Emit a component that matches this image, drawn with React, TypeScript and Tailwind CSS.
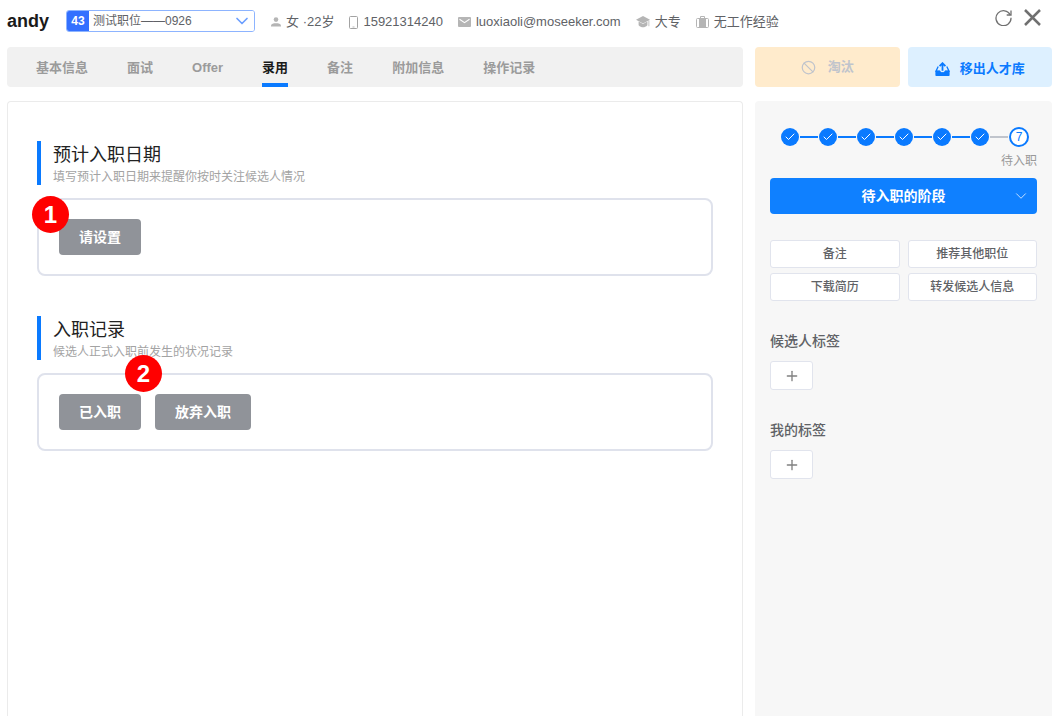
import { useState } from "react";
import type { ReactNode } from "react";
import { Ban, Check, ChevronDown, Plus } from "lucide-react";
import clsx from "clsx";

const tabs = ["基本信息", "面试", "Offer", "录用", "备注", "附加信息", "操作记录"];

const actions = ["备注", "推荐其他职位", "下载简历", "转发候选人信息"];

const tagGroups = ["候选人标签", "我的标签"];

const totalSteps = 7;

function PersonIcon() {
  return (
    <svg width="10" height="10" viewBox="0 0 10 10" fill="#b5b5b5" aria-hidden="true">
      <circle cx="5" cy="2.6" r="2.3" />
      <path d="M0 9.500V8.400C0 6.800 2.600 6.200 5 6.200s5 .6 5 2.200v1.100z" />
    </svg>
  );
}

function PhoneIcon() {
  return (
    <svg width="9" height="13" viewBox="0 0 9 13" fill="none" stroke="#a3a3a3" aria-hidden="true">
      <rect x=".5" y=".5" width="8" height="12" rx="1" />
      <path d="M3.500 11h2" strokeWidth=".8" />
    </svg>
  );
}

function MailIcon() {
  return (
    <svg width="13" height="10" viewBox="0 0 13 10" aria-hidden="true">
      <rect width="13" height="10" rx="1" fill="#b5b5b5" />
      <path d="M1.500 2.200 6.500 5.600l5-3.400" fill="none" stroke="#fff" strokeWidth="1.100" />
    </svg>
  );
}

function DegreeIcon() {
  return (
    <svg width="14" height="12" viewBox="0 0 14 12" fill="#b5b5b5" aria-hidden="true">
      <path d="M7 0 0 3.800l7 3.600 7-3.600z" />
      <path d="M2.600 5.600v3.600C4 10.600 5.500 11.300 7 11.300s3-.7 4.400-2.100V5.600L7 7.900z" />
      <path d="M12.500 4.500h.8v5.700h-.8z" />
    </svg>
  );
}

function BriefcaseIcon() {
  return (
    <svg width="13" height="12" viewBox="0 0 13 12" aria-hidden="true">
      <path d="M4.500 2.500v-2h4v2" fill="none" stroke="#b5b5b5" />
      <rect x=".5" y="2.500" width="12" height="9" rx="1" fill="none" stroke="#b5b5b5" />
      <path d="M3 2.500h7v9H3z" fill="#b5b5b5" />
    </svg>
  );
}

function RefreshIcon() {
  return (
    <svg width="17" height="17" viewBox="0 0 17 17" fill="none" stroke="#707070" strokeWidth="1.300" aria-hidden="true">
      <path d="M15.300 6A7.500 7.500 0 1 0 16 8.800" />
      <path d="M16 1.500V6h-4.300" />
    </svg>
  );
}

function CloseIcon() {
  return (
    <svg width="17" height="17" viewBox="0 0 17 17" stroke="#707070" strokeWidth="2.500" aria-hidden="true">
      <path d="M1 1l15 15M16 1 1 16" />
    </svg>
  );
}

function MoveOutIcon() {
  return (
    <svg width="15" height="14" viewBox="0 0 15 14" aria-hidden="true">
      <path d="M3.200 4.500 1 9.200h3.600l1 1.600h3.800l1-1.600H14l-2.200-4.700" fill="none" stroke="#0a7aff" strokeWidth="1.300" />
      <path d="M.4 8.800h4.400l1 1.600h3.400l1-1.600h4.400V13c0 .6-.4 1-1 1H1.400c-.6 0-1-.4-1-1z" fill="#0a7aff" />
      <path d="M7.500 8.800V1.500M4.600 4.200l2.900-3 2.900 3" fill="none" stroke="#0a7aff" strokeWidth="1.800" />
    </svg>
  );
}

function InfoItem({ icon, children }: { icon: ReactNode; children: ReactNode }) {
  return (
    <li className="flex items-center gap-[5px] whitespace-nowrap">
      {icon}
      <span>{children}</span>
    </li>
  );
}

function Marker({ className, children }: { className: string; children: ReactNode }) {
  return (
    <span
      className={clsx(
        "absolute flex size-[37px] items-center justify-center rounded-full bg-[#ff0000] text-2xl font-bold text-white",
        className
      )}
    >
      {children}
    </span>
  );
}

function Section({ title, hint, children }: { title: string; hint: string; children: ReactNode }) {
  return (
    <section>
      <div className="border-l-4 border-[#0a7aff] pl-3">
        <h2 className="text-lg leading-7 text-[#222]">{title}</h2>
        <p className="text-xs leading-4 text-[#a3a3a3]">{hint}</p>
      </div>
      <div className="relative mt-[13px] flex gap-[14px] rounded-lg border-2 border-[#dfe2ec] px-5 py-[19px]">
        {children}
      </div>
    </section>
  );
}

function GrayButton({ children }: { children: ReactNode }) {
  return (
    <button type="button" className="h-9 rounded bg-[#909399] px-5 text-sm font-bold text-white">
      {children}
    </button>
  );
}

function Steps() {
  const items: ReactNode[] = [];
  for (let i = 1; i < totalSteps; i++) {
    items.push(
      <li key={i} className="flex flex-1 items-center">
        <span className="flex size-[18px] shrink-0 items-center justify-center rounded-full bg-[#0a7aff] text-white">
          <Check size={12} strokeWidth={2} />
        </span>
        <span className={clsx("mx-px h-[2px] flex-1", i < totalSteps - 1 ? "bg-[#0a7aff]" : "bg-[#c0c4cc]")} />
      </li>
    );
  }
  return (
    <ol className="flex items-center pr-2 pl-[11px]">
      {items}
      <li className="flex size-5 items-center justify-center rounded-full border-2 border-[#0a7aff] bg-white text-xs text-[#0a7aff]">
        {totalSteps}
      </li>
    </ol>
  );
}

export default function App() {
  const [activeTab, setActiveTab] = useState("录用");

  return (
    <div className="flex min-h-screen flex-col bg-white pr-[10px] pl-[7px] font-['Liberation_Sans','Noto_Sans_CJK_SC',sans-serif] text-[13px] text-[#606266]">
      <header className="flex h-[47px] items-start justify-between pt-[9px] pr-[11px]">
        <div className="flex items-center">
          <h1 className="text-lg leading-6 font-bold text-[#1a1a1a]">andy</h1>
          <div className="relative ml-[17px] flex h-[22px] w-[189px] items-stretch overflow-hidden rounded-[3px] border border-[#8db4ff] text-xs">
            <span className="flex w-[22px] items-center justify-center bg-[#3370ff] font-bold text-white">43</span>
            <select
              aria-label="职位"
              className="min-w-0 flex-1 appearance-none bg-white pl-1 text-xs text-[#606266] outline-none"
            >
              <option>测试职位——0926</option>
            </select>
            <ChevronDown
              size={20}
              strokeWidth={2}
              className="pointer-events-none absolute top-0 right-[2px] text-[#6c9fff]"
            />
          </div>
          <ul className="ml-4 flex items-center gap-[15px] pt-[2px] leading-5">
            <InfoItem icon={<PersonIcon />}>女 ·22岁</InfoItem>
            <InfoItem icon={<PhoneIcon />}>15921314240</InfoItem>
            <InfoItem icon={<MailIcon />}>luoxiaoli@moseeker.com</InfoItem>
            <InfoItem icon={<DegreeIcon />}>大专</InfoItem>
            <InfoItem icon={<BriefcaseIcon />}>无工作经验</InfoItem>
          </ul>
        </div>
        <div className="flex gap-3">
          <button type="button" aria-label="刷新">
            <RefreshIcon />
          </button>
          <button type="button" aria-label="关闭">
            <CloseIcon />
          </button>
        </div>
      </header>

      <div className="flex flex-1 gap-3">
        <div className="flex min-w-0 flex-1 flex-col gap-[14px]">
          <nav className="flex h-10 gap-[39px] rounded bg-[#f1f1f1] pl-[29px]">
            {tabs.map((tab) => (
              <button
                key={tab}
                type="button"
                onClick={() => setActiveTab(tab)}
                className={clsx(
                  "border-b-4 pt-[5px] font-semibold",
                  tab === activeTab ? "border-b-[#0a7aff] text-[#1a1a1a]" : "border-b-transparent text-[#9b9b9b]"
                )}
              >
                {tab}
              </button>
            ))}
          </nav>

          <main className="flex flex-1 flex-col gap-10 rounded-t border border-b-0 border-[#ebebeb] px-[29px] pt-[39px]">
            <Section title="预计入职日期" hint="填写预计入职日期来提醒你按时关注候选人情况">
              <GrayButton>请设置</GrayButton>
              <Marker className="-top-1 -left-[7px]">1</Marker>
            </Section>
            <Section title="入职记录" hint="候选人正式入职前发生的状况记录">
              <GrayButton>已入职</GrayButton>
              <GrayButton>放弃入职</GrayButton>
              <Marker className="-top-5 left-[86px]">2</Marker>
            </Section>
          </main>
        </div>

        <div className="flex w-[297px] shrink-0 flex-col gap-[14px]">
          <div className="grid h-10 grid-cols-2 gap-2">
            <button
              type="button"
              disabled
              className="flex items-center justify-center gap-3 rounded bg-[#ffebcc] font-bold text-[#c0c4cc]"
            >
              <Ban size={15} strokeWidth={2} />
              淘汰
            </button>
            <button
              type="button"
              className="flex items-center justify-center gap-[10px] rounded bg-[#ddf0ff] pt-1 font-bold text-[#0a7aff]"
            >
              <MoveOutIcon />
              移出人才库
            </button>
          </div>

          <aside className="flex-1 rounded-t bg-[#f7f7f7] px-[15px] pt-[26px]">
            <Steps />
            <p className="mt-1 text-right text-xs leading-5 text-[#999]">待入职</p>
            <button
              type="button"
              className="relative mt-[7px] flex h-9 w-full items-center justify-center rounded bg-[#0f80ff] text-sm font-bold text-white"
            >
              待入职的阶段
              <ChevronDown size={18} strokeWidth={1} className="absolute right-[7px]" />
            </button>

            <div className="mt-[26px] grid grid-cols-2 gap-x-2 gap-y-[5px]">
              {actions.map((action) => (
                <button
                  key={action}
                  type="button"
                  className="h-7 rounded-[3px] border border-[#e1e4ed] bg-white text-xs font-medium"
                >
                  {action}
                </button>
              ))}
            </div>

            <div className="mt-[30px] space-y-[30px]">
              {tagGroups.map((group) => (
                <section key={group}>
                  <h3 className="text-sm leading-5 font-medium">{group}</h3>
                  <button
                    type="button"
                    aria-label={`添加${group}`}
                    className="mt-[10px] flex h-[29px] w-[43px] items-center justify-center rounded-[3px] border border-[#e1e4ed] bg-white text-[#808080]"
                  >
                    <Plus size={16} strokeWidth={2} />
                  </button>
                </section>
              ))}
            </div>
          </aside>
        </div>
      </div>
    </div>
  );
}
